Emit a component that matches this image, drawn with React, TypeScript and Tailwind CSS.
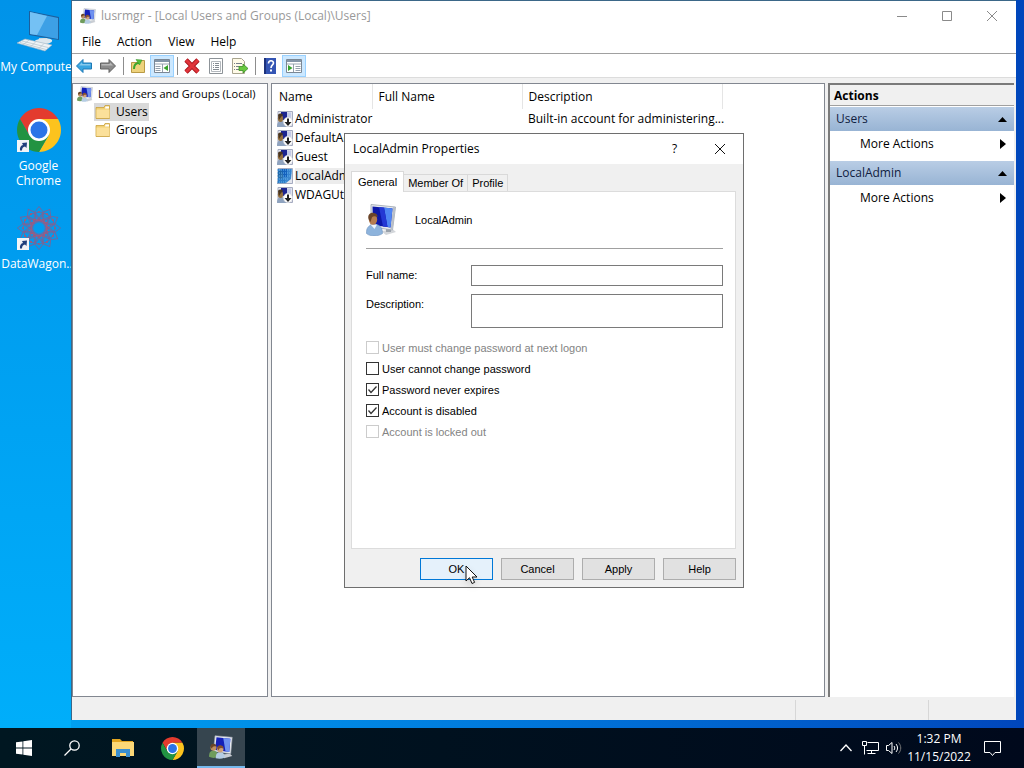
import clsx from "clsx";
import { useState, type ReactNode } from "react";

type IconProps = {
  className?: string;
};

function UserPcIcon({ className }: IconProps) {
  return (
    <svg viewBox="0 0 32 32" className={className} aria-hidden="true">
      <path d="M15 27 27 25.500 30 28 20 31z" fill="#d3d6da" />
      <path d="M20 24h5v4h-5z" fill="#9aa2ab" />
      <path d="M5 .5 29.500 3 26.500 26 5 23z" fill="#e6e9ee" stroke="#9ba3ae" strokeWidth=".8" />
      <path d="M27 3 29.500 3.200 26.500 26 24.500 25z" fill="#b9bfc8" />
      <path d="M6.500 2.500 26.500 4.500 24.500 23.500 7 21z" fill="#0d18a8" />
      <path d="M18 3.500 26.500 4.500 24.500 23.500 21.500 23z" fill="#4f86f4" />
      <path d="M13 3 18 3.500 21.500 23 17 22.500z" fill="#2438d4" />
      <path d="M.5 29.500c-.3-5 1.500-7.500 5.500-9 6-1 10.500 1.500 10.500 9-4 3-12 3.500-16 0z" fill="#8db3dc" stroke="#6f93bf" strokeWidth=".6" />
      <path d="M4.500 20.500 8.500 25l2.500-4.500z" fill="#eef4fb" />
      <ellipse cx="7" cy="15.500" rx="4.200" ry="5.200" fill="#b47c50" />
      <path d="M2.500 15C1.500 11 4 8.500 7 8.800c2.800.3 4.800 1.800 4.500 4.200-2.500-1-4.500-.8-5.500.2-.5 1.500-1 3-1.500 4.800z" fill="#6b4428" />
    </svg>
  );
}

function UsersPcIcon({ className }: IconProps) {
  return (
    <svg viewBox="0 0 32 32" className={className} aria-hidden="true">
      <path d="M17 26 28 25 31 28 20 31z" fill="#c9cdd3" />
      <path d="M8 1 31 3 29 25 6 22z" fill="#e6e9ee" stroke="#9ba3ae" strokeWidth=".8" />
      <path d="M10 3 28.500 5 27 22.500 8 20z" fill="#1420b8" />
      <path d="M19 4 28.500 5 27 22.500 22 22z" fill="#6f92f0" />
      <path d="M0 29c0-6 2-8 6-8s6 3 6 8c-4 2-8 2-12 0z" fill="#6f9c5c" />
      <circle cx="6" cy="17" r="4" fill="#c09160" />
      <path d="M2 16c0-4 3-5 5.500-4 2 .8 2.800 2 2 3.200-3-.8-5 0-5.500 3z" fill="#6a4526" />
      <path d="M9 31c0-6 2-8 6-8s6 3 6 7c-4 2-8 2-12 1z" fill="#b5cde4" />
      <circle cx="15" cy="19" r="4.200" fill="#d0a27a" />
      <path d="M11 18c0-4 3-5 5.500-4 2.500.8 3.300 2.500 2.500 4-3-1.200-5.500-1-6.300 2.500z" fill="#84502f" />
    </svg>
  );
}

function AccountIcon({ selected, disabled }: { selected?: boolean; disabled?: boolean }) {
  return (
    <svg viewBox="0 0 16 16" className="size-4 shrink-0" aria-hidden="true">
      <path d="M1 .5h14.500v15H1z" fill="#e4e6ee" stroke="#a5abc0" />
      <path d="M4 1h6v8H4z" fill="#1c2490" />
      <path d="M10 1.500h4v7h-4z" fill="#c3cae8" />
      <path d="M0 16c0-5 2-6 4.500-6S9 12 9 16z" fill="#8fa3bf" />
      <ellipse cx="3.500" cy="7.500" rx="2.600" ry="3.600" fill="#94703f" />
      <path d="M1 4c1-2 4-2 5 0L4 6 2 9z" fill="#4a3620" />
      {selected && (
        <>
          <path d="M1 1h14l-1 10-5 4H1z" fill="#1271c8" fillOpacity=".8" />
          <path
            d="M0 2h16M0 5h16M0 8h14M0 11h12M0 14h10"
            stroke="#66b4ee"
            strokeDasharray="1 1"
          />
        </>
      )}
      {disabled && (
        <>
          <circle cx="11" cy="11" r="4.700" fill="#fff" stroke="#c6c9d0" strokeWidth=".5" />
          <path d="M10 7.500h2V11h2.500L11 15l-3.500-4H10z" fill="#222" />
        </>
      )}
    </svg>
  );
}

function ChromeIcon({ className }: IconProps) {
  return (
    <svg viewBox="2 2 44 44" className={className} aria-hidden="true">
      <path d="M24 13h19.050A22 22 0 0 0 4.950 13l9.520 16.500z" fill="#e33b2e" />
      <path d="M33.530 29.500 24 46a22 22 0 0 0 19.050-33H24z" fill="#fcc31e" />
      <path d="M14.470 29.500 4.950 13A22 22 0 0 0 24 46l9.530-16.500z" fill="#229342" />
      <circle cx="24" cy="24" r="11" fill="#fff" />
      <circle cx="24" cy="24" r="8.500" fill="#2b74e8" />
    </svg>
  );
}

function ComputerIcon() {
  return (
    <svg viewBox="0 0 44 42" className="h-[42px] w-[44px]" aria-hidden="true">
      <path d="M22 27h8l3 4c0 2-10 3-12 1z" fill="#c7d6e0" />
      <path d="M12 0 42 6v23L12 24z" fill="#1d5f9c" />
      <path d="M13 1 41 7v21L13 23z" fill="#3da0e6" />
      <path d="M13 1 30 5 20 24l-7-1z" fill="#74c1f4" />
      <path d="M18 30c0-2 14-4 17-1 1 3-5 4-9 4s-8-1-8-3z" fill="#dfe8ee" />
      <path d="m8 28 27 6-7 6L0 32z" fill="#eef3f6" stroke="#9fb4c2" strokeWidth=".6" />
      <path d="m5 30 26 6.500M3 31.500l26 7M12 29l-6 5M19 30.500l-6 6M27 32.500l-6 6" stroke="#a9bac5" strokeWidth=".6" />
    </svg>
  );
}

function DataWagonIcon() {
  return (
    <svg viewBox="-22 -22 44 44" className="size-11" fill="none" aria-hidden="true">
      {[0, 30, 60, 90, 120, 150, 180, 210, 240, 270, 300, 330].map((angle) => (
        <g key={angle} transform={`rotate(${angle})`} stroke="#7b6496" strokeWidth=".9">
          <path d="M0-21.500 5-15 0-8l-5-7z" />
          <circle cx="0" cy="-11" r="5" />
          <path d="m-4-6 4-4 4 4" stroke="#a85878" />
          <circle cx="0" cy="-16" r=".6" stroke="#a85878" />
        </g>
      ))}
    </svg>
  );
}

function FolderIcon() {
  return (
    <svg viewBox="0 0 16 14" className="h-[14px] w-4" aria-hidden="true">
      <path d="M1 2.500h8l1-2h4.500v13H1z" fill="#f0cf72" stroke="#c9a13c" strokeWidth=".8" />
      <path d="M10.500 1.500H14v2h-4z" fill="#fff" />
      <path d="M1.500 4.500h13V13h-13z" fill="#fbe09a" />
    </svg>
  );
}

function ArrowIcon({ fill, stroke, flip }: { fill: string; stroke: string; flip?: boolean }) {
  return (
    <svg viewBox="0 0 16 16" className={clsx("size-4", flip && "-scale-x-100")} aria-hidden="true">
      <path d="M.5 8 7 1.500V5h8.500v6H7v3.500z" fill={fill} stroke={stroke} />
      <path d="M3 7.500 6 4.500V6h8.500v1.500z" fill="#fff" fillOpacity=".4" />
    </svg>
  );
}

function UpFolderIcon() {
  return (
    <svg viewBox="0 0 16 16" className="size-4" aria-hidden="true">
      <path d="M1.500 4.500h7l1-2h5v12h-13z" fill="#eed27c" stroke="#b99a45" />
      <path d="M4 11c0-4 2-6 5-6" fill="none" stroke="#3ba52c" strokeWidth="2" />
      <path d="M6 1.500 12 2l-2.500 5z" fill="#55c13c" stroke="#2f8a22" strokeWidth=".5" />
    </svg>
  );
}

function PaneIcon({ flip }: { flip?: boolean }) {
  return (
    <svg viewBox="0 0 16 16" className={clsx("size-4", flip && "-scale-x-100")} aria-hidden="true">
      <path d="M.5 1.500h15v13H.5z" fill="#fff" stroke="#7b8794" />
      <path d="M1 2h14v2H1z" fill="#8395a8" />
      <path d="M1 6h14" stroke="#9aa7b4" />
      <path d="M8.500 6v8M1.500 8.500h5M1.500 10.500h5M1.500 12.500h5" stroke="#94a0ac" />
      <path d="M14 7v6l-4.500-3z" fill="#37a32c" />
    </svg>
  );
}

function DeleteIcon() {
  return (
    <svg viewBox="0 0 16 16" className="size-4" aria-hidden="true">
      <path d="m2 2 12 12M14 2 2 14" stroke="#a8121b" strokeWidth="4.600" />
      <path d="m2 2 12 12M14 2 2 14" stroke="#e0343a" strokeWidth="3" />
    </svg>
  );
}

function PropertiesIcon() {
  return (
    <svg viewBox="0 0 16 16" className="size-4" fill="none" aria-hidden="true">
      <path d="M1.500.5h13v15h-13z" fill="#fff" stroke="#8d9398" />
      <path d="M3.500 3.500h9v10h-9z" stroke="#b3b8bd" />
      <path d="M5 5.500h1m1 0h4M5 7.500h1m1 0h4M5 9.500h1m1 0h4M5 11.500h6" stroke="#848b92" />
    </svg>
  );
}

function ExportIcon() {
  return (
    <svg viewBox="0 0 16 16" className="size-4" fill="none" aria-hidden="true">
      <path d="M.5.5h9l3 3v12H.5z" fill="#fffbe8" stroke="#a8a48e" />
      <path d="M2 5.500h1m1 0h6M2 8.500h1m1 0h3M2 11.500h1m1 0h4" stroke="#77808a" />
      <path d="M7 8.500h4V6l5 4.500-5 4.500v-2.500H7z" fill="#69c93f" stroke="#388e23" strokeWidth=".8" />
    </svg>
  );
}

function HelpIcon() {
  return (
    <svg viewBox="0 0 16 16" className="size-4" fill="none" aria-hidden="true">
      <path d="M2 0h12v16H2z" fill="#3455b4" />
      <path d="M2 0h2v16H2z" fill="#1d327c" />
      <path d="M6.500 5.500c0-3.500 5-3.500 5-.5 0 2-2.500 2-2.500 5" stroke="#fff" strokeWidth="1.600" />
      <path d="M8 11.500h2v2H8z" fill="#fff" />
    </svg>
  );
}

function ShortcutBadge() {
  return (
    <svg viewBox="0 0 12 12" className="absolute bottom-0 left-0 size-3" aria-hidden="true">
      <path d="M0 0h12v12H0z" fill="#f2f5f8" />
      <path d="M3 10.500C2.500 7 4 5.500 6 5L5 3l5-.500L9.500 8 8 6.500C6 7 5 8 5 10.500z" fill="#20407c" />
    </svg>
  );
}

function DesktopIcon({ label, shortcut, children }: { label: string; shortcut?: boolean; children: ReactNode }) {
  return (
    <button type="button" className="flex w-[77px] flex-col items-center gap-[6px] text-white">
      <span className="relative">
        {children}
        {shortcut && <ShortcutBadge />}
      </span>
      <span className="flex w-16 justify-center text-center leading-[15px] whitespace-pre">{label}</span>
    </button>
  );
}

function ToolButton({ label, active, children }: { label: string; active?: boolean; children: ReactNode }) {
  return (
    <button
      type="button"
      aria-label={label}
      className={clsx(
        "flex h-[22px] w-6 items-center justify-center border",
        active ? "border-[#99d1ff] bg-[#cce8ff]" : "border-transparent"
      )}
    >
      {children}
    </button>
  );
}

function ToolDivider() {
  return <span className="mr-[2px] ml-[3px] h-[18px] w-px bg-[#8d8d8d]" />;
}

const accounts = [
  { name: "Administrator", description: "Built-in account for administering...", disabled: true },
  { name: "DefaultAccount", disabled: true },
  { name: "Guest", disabled: true },
  { name: "LocalAdmin", selected: true },
  { name: "WDAGUtilityAccount", disabled: true },
];

function TreePane() {
  return (
    <nav className="w-[196px] shrink-0 border border-[#828790] bg-white pt-[1px]">
      <ul>
        <li className="flex h-[18px] items-center gap-[5px] pl-1 text-[11px] whitespace-nowrap">
          <UsersPcIcon className="size-4 shrink-0" />
          Local Users and Groups (Local)
        </li>
        {["Users", "Groups"].map((name) => (
          <li key={name} className="flex h-[18px] pl-[21px]">
            <span className={clsx("flex items-center gap-[5px] px-[1px]", name === "Users" && "bg-[#d9d9d9]")}>
              <FolderIcon />
              {name}
            </span>
          </li>
        ))}
      </ul>
    </nav>
  );
}

function AccountList() {
  return (
    <div className="min-w-0 flex-1 overflow-hidden border border-[#828790] bg-white">
      <table className="w-full table-fixed text-left">
        <thead>
          <tr className="h-[25px]">
            <th className="w-[100px] border-r border-[#e5e5e5] pl-[7px] font-normal">Name</th>
            <th className="w-[150px] border-r border-[#e5e5e5] pl-[6px] font-normal">Full Name</th>
            <th className="w-[200px] border-r border-[#e5e5e5] pl-[6px] font-normal">Description</th>
            <td />
          </tr>
        </thead>
        <tbody>
          {accounts.map((account) => (
            <tr key={account.name} className="h-[19px]">
              <td className="pl-[5px] whitespace-nowrap">
                <span className="flex items-center gap-[2px]">
                  <AccountIcon selected={account.selected} disabled={account.disabled} />
                  <span className={clsx(account.selected && "bg-[#ececec]")}>{account.name}</span>
                </span>
              </td>
              <td />
              <td className="pl-[6px] whitespace-nowrap">{account.description}</td>
              <td />
            </tr>
          ))}
        </tbody>
      </table>
    </div>
  );
}

function ActionsPane() {
  return (
    <aside className="mr-[2px] w-[186px] shrink-0 border-t-2 border-l-2 border-[#7a7a7a] bg-white">
      <h2 className="mb-px h-[21px] border-b border-[#a0a0a0] bg-[#f0f0f0] pl-1 leading-[21px] font-bold">Actions</h2>
      {["Users", "LocalAdmin"].map((name) => (
        <section key={name} className="mb-[5px]">
          <button
            type="button"
            className="flex h-[24px] w-full items-center justify-between bg-linear-to-b from-[#b9cde5] to-[#98b4d4] pr-[7px] pl-[6px] text-[#10203f]"
          >
            {name}
            <svg viewBox="0 0 9 5" className="h-[5px] w-[9px]" aria-hidden="true">
              <path d="M4.500 0 9 5H0z" />
            </svg>
          </button>
          <button type="button" className="flex h-[25px] w-full items-center justify-between pr-2 pl-[30px]">
            More Actions
            <svg viewBox="0 0 6 10" className="h-[10px] w-[6px]" aria-hidden="true">
              <path d="M0 0 6 5 0 10z" />
            </svg>
          </button>
        </section>
      ))}
    </aside>
  );
}

function ManagerWindow() {
  return (
    <main className="flex min-w-0 flex-1 flex-col border-t border-l border-[#3b6788] bg-[#f0f0f0] text-black">
      <header className="flex h-[29px] items-center bg-white pl-2">
        <UsersPcIcon className="size-4" />
        <h1 className="ml-[5px] flex-1 text-[#999]">lusrmgr - [Local Users and Groups (Local)\Users]</h1>
        <div className="flex pr-[1px]">
          <button type="button" aria-label="Minimize" className="flex w-[45px] justify-center">
            <svg viewBox="0 0 12 12" className="size-3" stroke="#8a8a8a" aria-hidden="true">
              <path d="M1 6.500h10" />
            </svg>
          </button>
          <button type="button" aria-label="Maximize" className="flex w-[45px] justify-center">
            <svg viewBox="0 0 12 12" className="size-3" fill="none" stroke="#8a8a8a" aria-hidden="true">
              <path d="M1.500 1.500h9v9h-9z" />
            </svg>
          </button>
          <button type="button" aria-label="Close" className="flex w-[46px] justify-center">
            <svg viewBox="0 0 12 12" className="size-3" stroke="#8a8a8a" aria-hidden="true">
              <path d="m1 1 10 10M11 1 1 11" />
            </svg>
          </button>
        </div>
      </header>
      <nav className="flex h-[23px] items-center gap-4 bg-white pl-[10px]">
        {["File", "Action", "View", "Help"].map((item) => (
          <button key={item} type="button">
            {item}
          </button>
        ))}
      </nav>
      <div className="flex h-[25px] items-center border-t border-b border-t-[#a0a0a0] border-b-[#dcdcdc] bg-white">
        <ToolButton label="Back">
          <ArrowIcon fill="#38a5e0" stroke="#1d79b5" />
        </ToolButton>
        <ToolButton label="Forward">
          <ArrowIcon fill="#8b8b8b" stroke="#626262" flip />
        </ToolButton>
        <ToolDivider />
        <ToolButton label="Up one level">
          <UpFolderIcon />
        </ToolButton>
        <ToolButton label="Show console tree" active>
          <PaneIcon />
        </ToolButton>
        <ToolDivider />
        <ToolButton label="Delete">
          <DeleteIcon />
        </ToolButton>
        <ToolButton label="Properties">
          <PropertiesIcon />
        </ToolButton>
        <ToolButton label="Export list">
          <ExportIcon />
        </ToolButton>
        <ToolDivider />
        <ToolButton label="Help topics">
          <HelpIcon />
        </ToolButton>
        <ToolButton label="Show action pane" active>
          <PaneIcon flip />
        </ToolButton>
      </div>
      <div className="mt-[5px] flex min-h-0 flex-1 gap-[3px]">
        <TreePane />
        <AccountList />
        <ActionsPane />
      </div>
      <footer className="flex h-[23px] justify-end pt-[3px]">
        <span className="w-[133px] border-l border-[#d7d7d7]" />
        <span className="w-[88px] border-l border-[#d7d7d7]" />
      </footer>
    </main>
  );
}

const options = [
  { label: "User must change password at next logon", disabled: true },
  { label: "User cannot change password" },
  { label: "Password never expires", checked: true },
  { label: "Account is disabled", checked: true },
  { label: "Account is locked out", disabled: true },
];

function OptionBox({ label, checked, disabled }: { label: string; checked?: boolean; disabled?: boolean }) {
  const [isOn, setIsOn] = useState(Boolean(checked));

  return (
    <label className={clsx("flex h-[21px] items-center gap-[3px]", disabled && "text-[#838383]")}>
      <span className="grid">
        <input
          type="checkbox"
          checked={isOn}
          disabled={disabled}
          onChange={() => setIsOn(!isOn)}
          className="col-start-1 row-start-1 size-[13px] appearance-none border border-[#333] bg-white disabled:border-[#ccc]"
        />
        {isOn && (
          <svg
            viewBox="0 0 13 13"
            className="pointer-events-none col-start-1 row-start-1 size-[13px]"
            fill="none"
            stroke="#333"
            aria-hidden="true"
          >
            <path d="m2.500 6.500 2.500 3 5.500-6" strokeWidth="1.300" />
          </svg>
        )}
      </span>
      {label}
    </label>
  );
}

function Cursor() {
  return (
    <svg viewBox="0 0 14 20" className="pointer-events-none absolute top-[6px] left-[44px] h-5 w-[14px] drop-shadow-md" aria-hidden="true">
      <path d="M1 1v15l3.500-3.300L7 18.500l2.600-1.100L7.200 12H12z" fill="#fff" stroke="#111" />
    </svg>
  );
}

function PropertiesDialog() {
  const [tab, setTab] = useState("General");

  return (
    <section
      role="dialog"
      aria-labelledby="dialog-title"
      className="absolute top-[133px] left-[344px] flex w-[400px] flex-col border border-[#6e6e6e] bg-[#f0f0f0] text-black"
    >
      <header className="flex h-[30px] items-center bg-white pl-2">
        <h2 id="dialog-title" className="flex-1">
          LocalAdmin Properties
        </h2>
        <button type="button" aria-label="Context help" className="w-[45px] text-center">
          ?
        </button>
        <button type="button" aria-label="Close dialog" className="flex w-[46px] justify-center">
          <svg viewBox="0 0 12 12" className="size-3" stroke="#111" aria-hidden="true">
            <path d="m1 1 10 10M11 1 1 11" />
          </svg>
        </button>
      </header>
      <div className="flex flex-col py-[7px] pr-[7px] pl-[6px] font-['Liberation_Sans',Arial,sans-serif] text-[11px]">
        <div role="tablist" className="flex items-end">
          {["General", "Member Of", "Profile"].map((name) => (
            <button
              key={name}
              type="button"
              role="tab"
              aria-selected={tab === name}
              onClick={() => setTab(name)}
              className={clsx(
                "border border-b-0 border-[#d9d9d9]",
                tab === name ? "relative z-10 -mb-px h-[21px] bg-white px-[6px]" : "h-[17px] border-l-0 px-1"
              )}
            >
              {name}
            </button>
          ))}
        </div>
        <form className="h-[358px] border border-[#dcdcdc] bg-white pr-3 pl-[14px]">
          <div className="flex h-[57px] items-center gap-[17px] border-b border-[#a0a0a0]">
            <UserPcIcon className="size-8" />
            LocalAdmin
          </div>
          <div className="mt-4 flex">
            <label htmlFor="full-name" className="w-[105px] pt-[2px]">
              Full name:
            </label>
            <input id="full-name" type="text" className="h-[21px] min-w-0 flex-1 border border-[#7a7a7a] px-1" />
          </div>
          <div className="mt-2 mb-[9px] flex">
            <label htmlFor="description" className="w-[105px] pt-[2px]">
              Description:
            </label>
            <textarea
              id="description"
              className="h-[34px] min-w-0 flex-1 resize-none border border-[#7a7a7a] px-1"
            />
          </div>
          {options.map((option) => (
            <OptionBox key={option.label} {...option} />
          ))}
        </form>
        <div className="mt-[9px] flex justify-end gap-2">
          <button type="button" className="relative h-[22px] w-[73px] border border-[#0078d7] bg-[#e5f1fb]">
            OK
            <Cursor />
          </button>
          {["Cancel", "Apply", "Help"].map((name) => (
            <button key={name} type="button" className="h-[22px] w-[73px] border border-[#adadad] bg-[#e1e1e1]">
              {name}
            </button>
          ))}
        </div>
      </div>
    </section>
  );
}

function Taskbar() {
  return (
    <footer className="flex h-10 shrink-0 items-stretch bg-linear-to-r from-[#001721] to-[#00091c] text-white">
      <button type="button" aria-label="Start" className="flex w-12 items-center justify-center">
        <svg viewBox="0 0 16 16" className="size-4" fill="#fff" aria-hidden="true">
          <path d="m0 2.300 6.500-.9v6.200H0zM7.300 1.300 16 0v7.600H7.300zM0 8.400h6.500v6.200L0 13.700zM7.300 8.400H16V16l-8.700-1.300z" />
        </svg>
      </button>
      <button type="button" aria-label="Search" className="flex w-12 items-center justify-center">
        <svg viewBox="0 0 16 16" className="size-4" fill="none" stroke="#fff" strokeWidth="1.300" aria-hidden="true">
          <circle cx="10.500" cy="5.500" r="4.700" />
          <path d="M7 9 .5 15.500" />
        </svg>
      </button>
      <button type="button" aria-label="File Explorer" className="flex w-[54px] items-center justify-center">
        <svg viewBox="0 0 22 18" className="h-[18px] w-[22px]" aria-hidden="true">
          <path d="M0 0h8l2 2h11v3H0z" fill="#e2a520" />
          <path d="M0 3h22v14H0z" fill="#fbd877" />
          <path d="M4 18V10h14v8h-4v-4H8v4z" fill="#3a8fd0" />
        </svg>
      </button>
      <button type="button" aria-label="Google Chrome" className="flex w-[44px] items-center justify-center">
        <ChromeIcon className="size-[23px]" />
      </button>
      <button
        type="button"
        aria-label="Local Users and Groups"
        className="ml-[3px] flex w-12 items-center justify-center border-b-2 border-[#76b9ed] bg-[#36454f]"
      >
        <UsersPcIcon className="size-6" />
      </button>
      <div className="ml-auto flex items-center">
        <button type="button" aria-label="Show hidden icons" className="flex w-6 justify-center">
          <svg viewBox="0 0 12 8" className="h-2 w-3" fill="none" stroke="#fff" strokeWidth="1.300" aria-hidden="true">
            <path d="m.5 7 5.500-6 5.500 6" />
          </svg>
        </button>
        <button type="button" aria-label="Network" className="flex w-6 justify-center">
          <svg viewBox="0 0 17 14" className="h-[14px] w-[17px]" fill="none" stroke="#fff" aria-hidden="true">
            <path d="M5.500 1.500h11v8h-12M.5.500h4v4h-4zM2.500 4.500v9M9.500 9.500v3M5.500 12.500h8" />
          </svg>
        </button>
        <button type="button" aria-label="Volume" className="flex w-6 justify-center">
          <svg viewBox="0 0 16 14" className="h-[14px] w-4" fill="none" stroke="#fff" aria-hidden="true">
            <path d="M.5 4.500h2l3.500-3v11l-3.500-3h-2z" />
            <path d="M8 5c1 1.500 1 2.500 0 4M10 3c2 2.500 2 5.500 0 8" />
            <path d="M12.500 1.500c3 3.500 3 7.500 0 11" stroke="#777" />
          </svg>
        </button>
        <time className="w-[66px] text-center leading-[18px]" dateTime="2022-11-15T13:32">
          1:32 PM 11/15/2022
        </time>
        <button type="button" aria-label="Notifications" className="mr-3 flex w-10 justify-center">
          <svg viewBox="0 0 17 17" className="size-[17px]" fill="none" stroke="#fff" aria-hidden="true">
            <path d="M.5 1.500h16v11H11l-2.500 3-2.500-3H.5z" />
          </svg>
        </button>
      </div>
    </footer>
  );
}

export default function App() {
  return (
    <div className="flex h-screen min-h-[640px] flex-col overflow-hidden bg-linear-to-r from-[#00a6f5] via-[#0078dc] to-[#0046bb] font-['Open_Sans','Noto_Sans',sans-serif] text-[12px] leading-4">
      <div className="relative flex min-h-0 flex-1 pr-2 pb-2">
        <div className="-mb-2 flex w-[71px] shrink-0 flex-col overflow-hidden bg-linear-to-b from-[#0093e9] to-[#00aefa] pt-[11px]">
          <DesktopIcon label="My Computer">
            <ComputerIcon />
          </DesktopIcon>
          <div className="mt-[34px] flex flex-col gap-[18px]">
            <DesktopIcon label={"Google\nChrome"} shortcut>
              <ChromeIcon className="size-11" />
            </DesktopIcon>
            <DesktopIcon label="DataWagon..." shortcut>
              <DataWagonIcon />
            </DesktopIcon>
          </div>
        </div>
        <ManagerWindow />
        <PropertiesDialog />
      </div>
      <Taskbar />
    </div>
  );
}
